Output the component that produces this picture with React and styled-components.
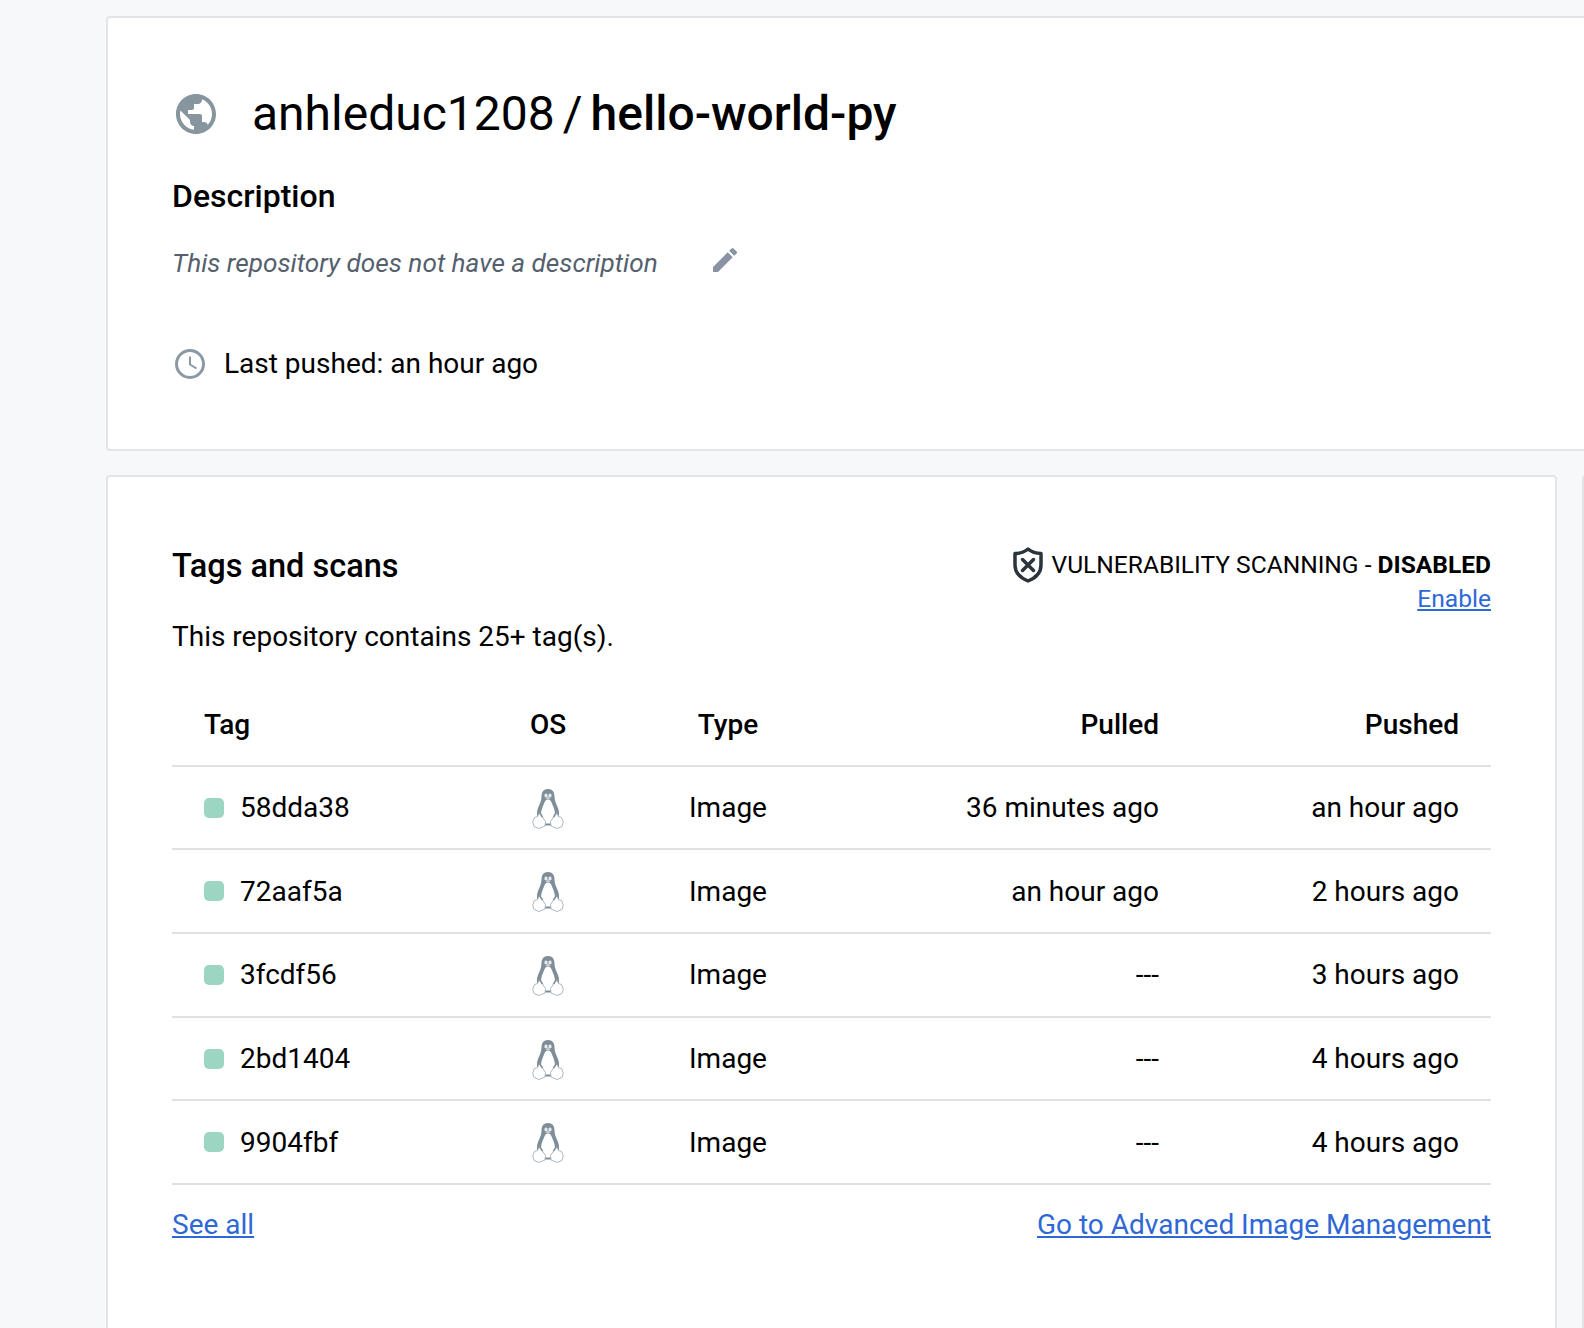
import React from 'react';
import styled, { createGlobalStyle } from 'styled-components';

const GlobalStyle = createGlobalStyle`
  html, body {
    margin: 0;
    padding: 0;
    background: #f7f8fa;
    overflow: hidden;
  }
  body {
    font-family: Roboto, "Liberation Sans", sans-serif;
    color: #000;
  }
`;

const Page = styled.div`
  width: 1584px;
  height: 1328px;
  overflow: hidden;
  padding: 16px 0 0 106px;
  box-sizing: border-box;
  display: flex;
  flex-direction: column;
  gap: 24px;
`;

const Card = styled.section`
  background: #fff;
  border: 2px solid #e3e4e8;
  border-radius: 4px;
  box-sizing: border-box;
  padding: 64px;
  flex-shrink: 0;
`;

const RepoCard = styled(Card)`
  width: 1600px;
  height: 435px;
  padding-top: 67px;
`;

const CardRow = styled.div`
  display: flex;
  gap: 25px;
  flex-shrink: 0;
`;

const TagsCard = styled(Card)`
  width: 1451px;
  height: 900px;
  padding-top: 69px;
`;

const SideCard = styled(Card)`
  width: 400px;
  height: 900px;
`;

const TitleRow = styled.div`
  display: flex;
  align-items: center;
  height: 56px;
`;

const GlobeSvg = styled.svg`
  flex-shrink: 0;
  margin-top: 2px;
`;

const RepoTitle = styled.h1`
  display: flex;
  margin: 1px 0 0 32px;
  font-size: 48px;
  font-weight: 400;
  line-height: 56px;
  white-space: nowrap;
`;

const Slash = styled.span`
  margin: 0 8px;
`;

const RepoName = styled.strong`
  font-weight: 500;
`;

const SectionLabel = styled.h2`
  margin: 35px 0 0;
  font-size: 32px;
  font-weight: 500;
  line-height: 40px;
`;

const DescriptionRow = styled.div`
  display: flex;
  align-items: center;
  margin-top: 29px;
  height: 36px;
`;

const DescriptionText = styled.em`
  color: #555f6e;
  font-size: 26.2px;
  line-height: 36px;
`;

const EditButton = styled.span`
  display: flex;
  margin-left: 51px;
  margin-top: -6px;
`;

const PushedRow = styled.div`
  display: flex;
  align-items: center;
  gap: 16px;
  margin-top: 65px;
  font-size: 28px;
  line-height: 36px;
`;

const TagsHeader = styled.div`
  display: flex;
  justify-content: space-between;
  align-items: flex-start;
`;

const TagsTitle = styled.h2`
  margin: 0;
  font-size: 32.5px;
  font-weight: 500;
  line-height: 40px;
`;

const ScanBlock = styled.div`
  display: flex;
  flex-direction: column;
  align-items: flex-end;
  padding-top: 3px;
`;

const ScanStatus = styled.div`
  display: flex;
  align-items: center;
  gap: 9px;
  height: 32px;
  font-size: 24.55px;
  line-height: 32px;
`;

const Link = styled.a`
  color: #2e68d6;
  text-decoration: underline;
  cursor: pointer;
`;

const EnableLink = styled(Link)`
  font-size: 24.6px;
  line-height: 35px;
`;

const TagCount = styled.p`
  margin: 3px 0 0;
  font-size: 28px;
  line-height: 36px;
`;

const TagTable = styled.div`
  margin-top: 28px;
`;

const Row = styled.div`
  display: grid;
  grid-template-columns: 264px 160px 200px 331px 300px;
  align-items: center;
  height: 83.7px;
  box-sizing: border-box;
  padding: 0 32px;
  border-bottom: 2px solid #e1e1e3;
  font-size: 28px;
`;

const Cell = styled.div`
  text-align: ${(p) => p.$align || 'left'};
  white-space: nowrap;
`;

const HeadCell = styled(Cell)`
  font-weight: 500;
  margin-top: 2px;
`;

const TagCell = styled(Cell)`
  display: flex;
  align-items: center;
  gap: 16px;
`;

const OsCell = styled(Cell)`
  display: flex;
  justify-content: center;
  margin-top: 2px;
`;

const StatusDot = styled.span`
  width: 20px;
  height: 20px;
  border-radius: 5px;
  background: #9cd6c2;
`;

const TableFooter = styled.div`
  display: flex;
  justify-content: space-between;
  margin-top: 20px;
  font-size: 28px;
  line-height: 40px;
`;

const tags = [
  { id: '58dda38', pulled: '36 minutes ago', pushed: 'an hour ago' },
  { id: '72aaf5a', pulled: 'an hour ago', pushed: '2 hours ago' },
  { id: '3fcdf56', pulled: '---', pushed: '3 hours ago' },
  { id: '2bd1404', pulled: '---', pushed: '4 hours ago' },
  { id: '9904fbf', pulled: '---', pushed: '4 hours ago' },
];

const GlobeIcon = () => (
  <GlobeSvg width="48" height="48" viewBox="0 0 24 24" fill="#87959f">
    <path d="M12 2C6.48 2 2 6.48 2 12s4.48 10 10 10 10-4.48 10-10S17.52 2 12 2zm-1 17.93c-3.95-.49-7-3.85-7-7.93 0-.62.08-1.21.21-1.79L9 15v1c0 1.1.9 2 2 2v1.93zm6.9-2.54c-.26-.81-1-1.39-1.9-1.39h-1v-3c0-.55-.45-1-1-1H8v-2h2c.55 0 1-.45 1-1V7h2c1.1 0 2-.9 2-2v-.41c2.93 1.19 5 4.06 5 7.41 0 2.08-.8 3.97-2.1 5.39z" />
  </GlobeSvg>
);

const PencilIcon = () => (
  <svg width="32" height="32" viewBox="0 0 24 24" fill="#8b92a3">
    <path d="M3 17.25V21h3.75L17.81 9.94l-3.75-3.75L3 17.25zM20.71 7.04a1 1 0 0 0 0-1.41l-2.34-2.34a1 1 0 0 0-1.41 0l-1.83 1.83 3.75 3.75 1.83-1.83z" />
  </svg>
);

const ClockIcon = () => (
  <svg width="36" height="36" viewBox="0 0 36 36" fill="none" stroke="#8a99a4" strokeWidth="3">
    <circle cx="18" cy="18" r="13.500" />
    <path d="M18 10.500v8l6.500 4" strokeWidth="2" />
  </svg>
);

const ShieldIcon = () => (
  <svg width="30" height="36" viewBox="0 0 30 36" fill="none" stroke="#2b333b" strokeWidth="3.500" strokeLinejoin="round">
    <path d="M15 2 C18 4.500 23 6.500 28 6.500 V18 C28 25.500 22.500 31 15 34 C7.500 31 2 25.500 2 18 V6.500 C7 6.500 12 4.500 15 2 Z" />
    <path d="M9.500 12.500 L20.500 23.500 M20.500 12.500 L9.500 23.500" strokeLinecap="round" />
  </svg>
);

const PenguinIcon = () => (
  <svg width="32" height="40" viewBox="0 0 32 40">
    <path d="M16 0 C11.500 0 9.500 3 9.500 7.500 C9.500 12 7.500 15 6 19 C4.500 23 4.500 27 6.500 31 L25.500 31 C27.500 27 27.500 23 26 19 C24.500 15 22.500 12 22.500 7.500 C22.500 3 20.500 0 16 0 Z" fill="#7f8d98" />
    <path d="M16 10.500 C14 10.500 13 12 12 14.500 C10.500 18 9 21.500 9 25.500 C9 30 12 34.500 16 34.500 C20 34.500 23 30 23 25.500 C23 21.500 21.500 18 20 14.500 C19 12 18 10.500 16 10.500 Z" fill="#fff" />
    <path d="M12.500 5.500 C13 4 15 4 15.500 5.500 L15.500 8 L12.500 8 Z M16.500 5.500 C17 4 19 4 19.500 5.500 L19.500 8 L16.500 8 Z" fill="#e6eaed" />
    <path d="M13 9 L16 7.500 L19 9 L16 11 Z" fill="#c3cbd1" />
    <path d="M11 35.500 H21" stroke="#7f8d98" strokeWidth="2" />
    <path d="M0.700 33 L2.500 28.500 L5.500 27.500 L7.500 23.500 L13.500 32.500 L13 37 L7 39.500 L2 37.500 Z M31.300 33 L29.500 28.500 L26.500 27.500 L24.500 23.500 L18.500 32.500 L19 37 L25 39.500 L30 37.500 Z" fill="#fff" stroke="#a4afb8" strokeWidth="0.900" />
    <path d="M7.500 23.500 L10.500 28 M24.500 23.500 L21.500 28" stroke="#7f8d98" strokeWidth="1.500" />
  </svg>
);

export default function App() {
  return (
    <Page>
      <GlobalStyle />
      <RepoCard>
        <TitleRow>
          <GlobeIcon />
          <RepoTitle>anhleduc1208<Slash>/</Slash><RepoName>hello-world-py</RepoName></RepoTitle>
        </TitleRow>
        <SectionLabel>Description</SectionLabel>
        <DescriptionRow>
          <DescriptionText>This repository does not have a description</DescriptionText>
          <EditButton><PencilIcon /></EditButton>
        </DescriptionRow>
        <PushedRow>
          <ClockIcon />
          Last pushed: an hour ago
        </PushedRow>
      </RepoCard>
      <CardRow>
        <TagsCard>
          <TagsHeader>
            <TagsTitle>Tags and scans</TagsTitle>
            <ScanBlock>
              <ScanStatus>
                <ShieldIcon />
                <span>VULNERABILITY SCANNING - <strong>DISABLED</strong></span>
              </ScanStatus>
              <EnableLink>Enable</EnableLink>
            </ScanBlock>
          </TagsHeader>
          <TagCount>This repository contains 25+ tag(s).</TagCount>
          <TagTable>
            <Row>
              <HeadCell>Tag</HeadCell>
              <HeadCell $align="center">OS</HeadCell>
              <HeadCell $align="center">Type</HeadCell>
              <HeadCell $align="right">Pulled</HeadCell>
              <HeadCell $align="right">Pushed</HeadCell>
            </Row>
            {tags.map((tag) => (
              <Row key={tag.id}>
                <TagCell><StatusDot />{tag.id}</TagCell>
                <OsCell><PenguinIcon /></OsCell>
                <Cell $align="center">Image</Cell>
                <Cell $align="right">{tag.pulled}</Cell>
                <Cell $align="right">{tag.pushed}</Cell>
              </Row>
            ))}
          </TagTable>
          <TableFooter>
            <Link>See all</Link>
            <Link>Go to Advanced Image Management</Link>
          </TableFooter>
        </TagsCard>
        <SideCard />
      </CardRow>
    </Page>
  );
}
